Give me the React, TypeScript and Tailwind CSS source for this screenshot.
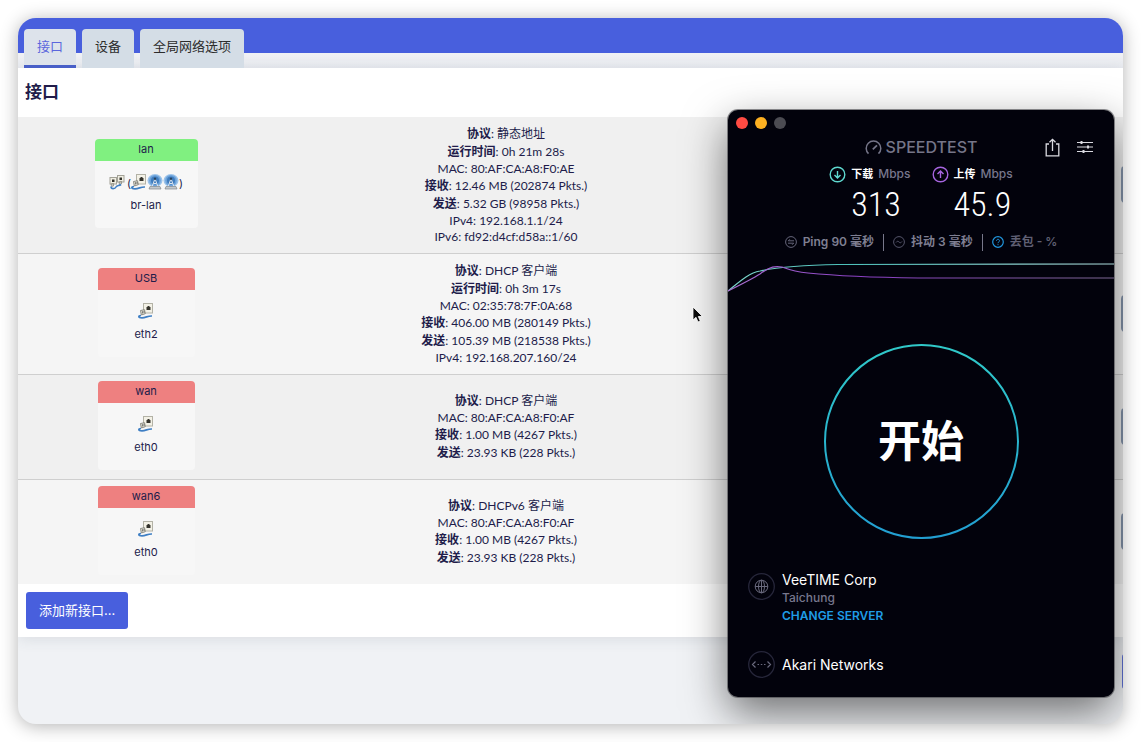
import type { ReactNode } from "react";

function PortIcon({ className = "" }: { className?: string }) {
  return (
    <svg viewBox="0 0 16 16" className={`size-4 shrink-0 ${className}`} aria-hidden="true">
      <rect x="5.500" y="0.500" width="9" height="9.500" fill="#f3f1e6" stroke="#b3b2a6" />
      <path d="M8.500 4h1V3h2v1h1v3h-4z" fill="#34332c" />
      <path d="M2.500 7.500l4-.8.8 4-4 1.300z" fill="#dcdcd4" stroke="#77776d" strokeWidth=".8" />
      <path d="M4.500 8.200v2.200M6 8v2" stroke="#55554d" strokeWidth=".7" />
      <path d="M3 12.500C0 13 0 14.800 4 14.800c4 0 5.500-2 10-1.800" fill="none" stroke="#3f7fc4" strokeWidth="1.700" />
    </svg>
  );
}

function BridgeIcon() {
  return (
    <svg viewBox="0 0 16 16" className="size-4 shrink-0" aria-hidden="true">
      <rect x="1" y="3.500" width="6.500" height="6.500" fill="#f0eee2" stroke="#a3a297" />
      <rect x="8.500" y="1.500" width="6.500" height="6.500" fill="#f0eee2" stroke="#a3a297" />
      <path d="M3 5.500h2.500v2.500H3zM10.500 3.500H13V6h-2.500z" fill="#33322b" />
      <path d="M2 10l2.500-.5V12L2.500 12.500zM10 8l2.500-.5v2.500l-2 .5z" fill="#c9c9c0" stroke="#77776d" strokeWidth=".6" />
      <path d="M2 12.500c0 3 4 2.500 5 .5s3-1 5-2.500" fill="none" stroke="#3f7fc4" strokeWidth="1.600" />
    </svg>
  );
}

function WifiIcon() {
  return (
    <svg viewBox="0 0 16 16" className="size-4 shrink-0" aria-hidden="true">
      <ellipse cx="8" cy="6.500" rx="7.500" ry="6.500" fill="#9cc3ea" />
      <ellipse cx="8" cy="6.500" rx="5.800" ry="5.500" fill="#6ba2da" />
      <ellipse cx="8" cy="6.500" rx="4" ry="4" fill="#3f7cbd" />
      <path d="M8 4.500L5 13M8 4.500L11 13M6.500 9.500h3" fill="none" stroke="#dfe6ee" strokeWidth="1" />
      <circle cx="8" cy="4.800" r="1.200" fill="#26425f" />
      <path d="M3 12.500h10l1 2.500H2z" fill="#c3c8cc" stroke="#83888c" strokeWidth=".7" />
    </svg>
  );
}

type Line = { label: string; value: string; cjk: boolean };

type Iface = {
  name: string;
  device: string;
  tone: "green" | "red";
  bridge?: boolean;
  lines: Line[];
};

const zh = (label: string, value: string): Line => ({ label, value, cjk: true });
const en = (label: string, value: string): Line => ({ label, value, cjk: false });

const interfaces: Iface[] = [
  {
    name: "lan",
    device: "br-lan",
    tone: "green",
    bridge: true,
    lines: [
      zh("协议", "静态地址"),
      zh("运行时间", "0h 21m 28s"),
      en("MAC", "80:AF:CA:A8:F0:AE"),
      zh("接收", "12.46 MB (202874 Pkts.)"),
      zh("发送", "5.32 GB (98958 Pkts.)"),
      en("IPv4", "192.168.1.1/24"),
      en("IPv6", "fd92:d4cf:d58a::1/60"),
    ],
  },
  {
    name: "USB",
    device: "eth2",
    tone: "red",
    lines: [
      zh("协议", "DHCP 客户端"),
      zh("运行时间", "0h 3m 17s"),
      en("MAC", "02:35:78:7F:0A:68"),
      zh("接收", "406.00 MB (280149 Pkts.)"),
      zh("发送", "105.39 MB (218538 Pkts.)"),
      en("IPv4", "192.168.207.160/24"),
    ],
  },
  {
    name: "wan",
    device: "eth0",
    tone: "red",
    lines: [
      zh("协议", "DHCP 客户端"),
      en("MAC", "80:AF:CA:A8:F0:AF"),
      zh("接收", "1.00 MB (4267 Pkts.)"),
      zh("发送", "23.93 KB (228 Pkts.)"),
    ],
  },
  {
    name: "wan6",
    device: "eth0",
    tone: "red",
    lines: [
      zh("协议", "DHCPv6 客户端"),
      en("MAC", "80:AF:CA:A8:F0:AF"),
      zh("接收", "1.00 MB (4267 Pkts.)"),
      zh("发送", "23.93 KB (228 Pkts.)"),
    ],
  },
];

function InterfaceCard({ item }: { item: Iface }) {
  return (
    <div
      className={`mx-auto h-[89px] overflow-hidden rounded-[4px] bg-[#f7f7f7] text-center text-[11px] ${
        item.bridge ? "w-[103px]" : "w-[97px]"
      }`}
    >
      <div className={`h-[22px] leading-[20px] ${item.tone === "green" ? "bg-[#80f080]" : "bg-[#ee8080]"}`}>
        {item.name}
      </div>
      <div className="flex h-[33px] items-end justify-center pb-1">
        {item.bridge ? (
          <>
            <BridgeIcon />
            <span className="ml-[2px] leading-[14px]">(</span>
            <PortIcon />
            <WifiIcon />
            <WifiIcon />
            <span className="leading-[14px]">)</span>
          </>
        ) : (
          <PortIcon />
        )}
      </div>
      <div className="leading-[22px]">{item.device}</div>
    </div>
  );
}

function AdminPage() {
  return (
    <>
      <header className="bg-[linear-gradient(#485fdd_35px,#f0f1f4_35px,#e9ebf0_100%)] pt-[11px]">
        <nav className="flex gap-[6px] px-[6px] text-[13px] leading-[34px]">
          <a href="#interfaces" className="h-[39px] rounded-t-[4px] border-b-3 border-[#485fc8] bg-[#dde3eb] px-[13px] text-[#5b66dd]">
            接口
          </a>
          <a href="#devices" className="h-[39px] rounded-t-[4px] bg-[#d4dde6] px-[13px] text-[#2c2c2c]">
            设备
          </a>
          <a href="#globals" className="h-[39px] rounded-t-[4px] bg-[#d4dde6] px-[13px] text-[#2c2c2c]">
            全局网络选项
          </a>
        </nav>
      </header>
      <main className="bg-white shadow-[0_2px_14px_rgba(60,70,90,0.12)]">
        <h1 className="h-[49px] px-[7px] text-[17px] leading-[48px] font-bold">接口</h1>
        <table className="w-full table-fixed border-collapse text-[12px]">
          <colgroup>
            <col className="w-[256px]" />
            <col className="w-[464px]" />
            <col />
          </colgroup>
          <tbody>
            {interfaces.map((item) => (
              <tr key={item.name} className="border-b border-[#cfcfcf] odd:bg-[#f0f0f0] even:bg-[#f5f5f5] last:border-b-0">
                <td className="pt-[6px] pb-[9px]">
                  <InterfaceCard item={item} />
                </td>
                <td className="py-2 text-center font-[Lato,'Noto_Sans_CJK_SC',sans-serif]">
                  {item.lines.map((line) => (
                    <div key={line.label} className={line.cjk ? "leading-[18px]" : "leading-[16px]"}>
                      {line.cjk ? <b className="font-bold">{line.label}</b> : line.label}: {line.value}
                    </div>
                  ))}
                </td>
                <td className="pb-[2px]">
                  <div className="flex justify-end">
                    <button aria-label="重启" className="-mr-[66px] h-[37px] w-[68px] rounded-[4px] bg-[#8494ab]" />
                  </div>
                </td>
              </tr>
            ))}
          </tbody>
        </table>
        <div className="p-2">
          <button className="h-[37px] rounded-[3px] bg-[#485fdd] px-[13px] text-[13px] text-white">添加新接口...</button>
        </div>
      </main>
      <div className="mt-[17px] flex justify-end">
        <button aria-label="保存" className="-mr-[66px] h-[35px] w-[67px] rounded-[3px] bg-[#5f72d8]" />
      </div>
    </>
  );
}

function Metric({ color, up, label, value }: { color: string; up?: boolean; label: string; value: string }) {
  return (
    <div className="flex gap-[5px]">
      <svg viewBox="0 0 17 17" className="mt-px size-[17px]" fill="none" stroke={color} strokeWidth="1.400" aria-hidden="true">
        <circle cx="8.500" cy="8.500" r="7.300" />
        <path d={up ? "M8.500 12V5M5.500 8l3-3 3 3" : "M8.500 5v7M5.500 9l3 3 3-3"} />
      </svg>
      <div>
        <div className="flex gap-[5px] text-[12px] leading-[18px]">
          <span className="text-[11px] font-bold">{label}</span>
          <span className="font-medium text-[#77778c]">Mbps</span>
        </div>
        <div className="font-['Roboto_Condensed',Roboto,sans-serif] text-[34px] leading-[42px] font-light">{value}</div>
      </div>
    </div>
  );
}

function Stat({ icon, children }: { icon: ReactNode; children: ReactNode }) {
  return (
    <div className="flex items-center gap-[6px]">
      {icon}
      <span>{children}</span>
    </div>
  );
}

function SpeedPanel() {
  return (
    <section className="absolute top-[92px] right-[9px] flex h-[587px] w-[386px] flex-col rounded-[10px] bg-[#02020c] font-[Inter,'Noto_Sans_CJK_SC',sans-serif] text-white shadow-[0_0_0_1px_rgba(70,70,75,0.6),0_16px_44px_rgba(0,0,0,0.55)]">
      <div className="flex gap-[7px] px-2 pt-[7px]">
        <button aria-label="关闭" className="size-3 rounded-full bg-[#ff4b43]" />
        <button aria-label="最小化" className="size-3 rounded-full bg-[#fdb021]" />
        <button aria-label="缩放" className="size-3 rounded-full bg-[#4b4b52]" />
      </div>

      <div className="mt-2 grid h-5 grid-cols-[1fr_auto_1fr] items-center px-[21px]">
        <span />
        <div className="flex items-center gap-1 text-[#757588]">
          <svg viewBox="0 0 17 15" className="h-[15px] w-[17px]" fill="none" stroke="currentColor" strokeWidth="1.500" aria-hidden="true">
            <path d="M3.500 13.600A7.300 7.300 0 1 1 13.500 13.600" />
            <path d="M7.800 9.300l4.200-4" strokeWidth="1.800" />
          </svg>
          <span className="text-[16px] leading-5 font-medium">SPEEDTEST</span>
        </div>
        <div className="flex items-center justify-end gap-[17px] text-[#d9d9e0]">
          <button aria-label="分享">
            <svg viewBox="0 0 15 19" className="h-[19px] w-[15px]" fill="none" stroke="currentColor" strokeWidth="1.300" aria-hidden="true">
              <path d="M4 6H1.200v11.800h12.600V6H11M7.500 13V1.500M4.500 4.300l3-3 3 3" />
            </svg>
          </button>
          <button aria-label="设置">
            <svg viewBox="0 0 16 14" className="h-[14px] w-4" fill="none" stroke="currentColor" strokeWidth="1.200" aria-hidden="true">
              <path d="M0 2.500h16M0 7h16M0 11.500h16" />
              <path d="M4.500 1v3M11 5.500v3M6.500 10v3" strokeWidth="2" />
            </svg>
          </button>
        </div>
      </div>

      <div className="mt-2 flex justify-center gap-[21px]">
        <Metric color="#5fd9d0" label="下载" value="313" />
        <Metric color="#a765e0" up label="上传" value="45.9" />
      </div>

      <div className="mt-[8px] flex h-[18px] items-center justify-center gap-[9px] text-[12px] font-semibold whitespace-nowrap text-[#7f7f92]">
        <Stat
          icon={
            <svg viewBox="0 0 12 12" className="size-3" fill="none" stroke="#65657a" aria-hidden="true">
              <circle cx="6" cy="6" r="5.400" />
              <path d="M9 4.800H3.300l1.500-1.500M3 7.200h5.700L7.200 8.700" />
            </svg>
          }
        >
          Ping 90 毫秒
        </Stat>
        <span className="h-[17px] w-px bg-[#77778a]" />
        <Stat
          icon={
            <svg viewBox="0 0 12 12" className="size-3" fill="none" stroke="#55556a" aria-hidden="true">
              <circle cx="6" cy="6" r="5.400" />
              <path d="M3 6.500c1-1.500 2-1.500 3-.5s2 1 3-.5" />
            </svg>
          }
        >
          抖动 3 毫秒
        </Stat>
        <span className="h-[17px] w-px bg-[#77778a]" />
        <Stat
          icon={
            <svg viewBox="0 0 12 12" className="size-3" fill="none" stroke="#2196dd" aria-hidden="true">
              <circle cx="6" cy="6" r="5.300" strokeWidth="1.200" />
              <path d="M4.500 4.800c0-2 3-2 3 0C7.500 6 6 5.800 6 7.200M6 8.200v1" />
            </svg>
          }
        >
          <span className="text-[#5f5f73]">丢包 - %</span>
        </Stat>
      </div>

      <svg viewBox="0 0 386 34" preserveAspectRatio="none" className="mt-[8px] h-[34px] w-full" fill="none" strokeWidth="1.200" aria-hidden="true">
        <defs>
          <linearGradient id="down" gradientUnits="userSpaceOnUse" x1="0" y1="0" x2="386" y2="0">
            <stop offset="0" stopColor="#7fd6cc" />
            <stop offset=".3" stopColor="#4cc0ba" />
            <stop offset="1" stopColor="#a9d6d6" />
          </linearGradient>
          <linearGradient id="up" gradientUnits="userSpaceOnUse" x1="0" y1="0" x2="386" y2="0">
            <stop offset="0" stopColor="#a86fd0" />
            <stop offset=".35" stopColor="#8a3fc4" />
            <stop offset="1" stopColor="#7a6690" />
          </linearGradient>
        </defs>
        <path d="M0 32C10 24 20 14 32 12C55 7 80 6 110 5.500S250 5 386 5" stroke="url(#down)" />
        <path d="M0 32C16 24 24 20 32 15C42 7 48 7 54 8C62 11 68 13 80 14C120 18 150 18.500 190 19S300 19 386 19" stroke="url(#up)" />
      </svg>

      <button className="relative mx-auto mt-[51px] flex size-[195px] items-center justify-center rounded-full text-[43px] leading-none font-bold">
        <svg viewBox="0 0 195 195" className="absolute inset-0 size-full" fill="none" aria-hidden="true">
          <defs>
            <linearGradient id="ring" x1="0" y1="0" x2="0" y2="1">
              <stop offset="0" stopColor="#30c9c9" />
              <stop offset="1" stopColor="#229fd2" />
            </linearGradient>
          </defs>
          <circle cx="97.500" cy="97.500" r="96.500" stroke="url(#ring)" strokeWidth="2" />
        </svg>
        开始
      </button>

      <div className="mt-[31px] flex gap-[7px] px-5">
        <svg viewBox="0 0 27 27" className="mt-[3px] size-[27px]" fill="none" stroke="#6a6a7e" aria-hidden="true">
          <circle cx="13.500" cy="13.500" r="12.800" stroke="#26263a" strokeWidth="1.300" />
          <circle cx="13.500" cy="13.500" r="6.300" />
          <ellipse cx="13.500" cy="13.500" rx="3" ry="6.300" />
          <path d="M7.200 13.500h12.600M13.500 7.200v12.600" />
        </svg>
        <div>
          <div className="text-[14px] leading-[19px]">VeeTIME Corp</div>
          <div className="text-[12px] leading-[18px] font-medium text-[#77778c]">Taichung</div>
          <a href="#server" className="block text-[12px] leading-[18px] font-semibold text-[#1f9ce6]">
            CHANGE SERVER
          </a>
        </div>
      </div>

      <div className="mt-[26px] flex items-center gap-[7px] px-5">
        <svg viewBox="0 0 27 27" className="size-[27px]" fill="none" stroke="#6a6a7e" strokeWidth="1.200" aria-hidden="true">
          <circle cx="13.500" cy="13.500" r="12.800" stroke="#26263a" strokeWidth="1.300" />
          <path d="M7.500 10.500l-3 3 3 3M19.500 10.500l3 3-3 3" />
          <path d="M9.500 13.500h1.500M12.800 13.500h1.500M16 13.500h1.500" />
        </svg>
        <div className="text-[14px] leading-[19px]">Akari Networks</div>
      </div>
    </section>
  );
}

export default function App() {
  return (
    <div className="flex min-h-screen flex-col bg-white p-[18px] font-[Inter,'Noto_Sans_CJK_SC',sans-serif] text-[#211c4a]">
      <div className="relative min-h-[706px] flex-1 overflow-hidden rounded-[18px] bg-[#f0f2f5] shadow-[0_2px_18px_rgba(0,0,0,0.3)]">
        <AdminPage />
        <SpeedPanel />
        <svg viewBox="0 0 12 18" className="absolute top-[288px] left-[674px] h-[18px] w-3" aria-hidden="true">
          <path d="M1 1v13l3-2.700L6 16l2.300-1-2-4.500H10.500z" fill="#0a0a0a" stroke="#fff" strokeWidth=".8" />
        </svg>
      </div>
    </div>
  );
}
